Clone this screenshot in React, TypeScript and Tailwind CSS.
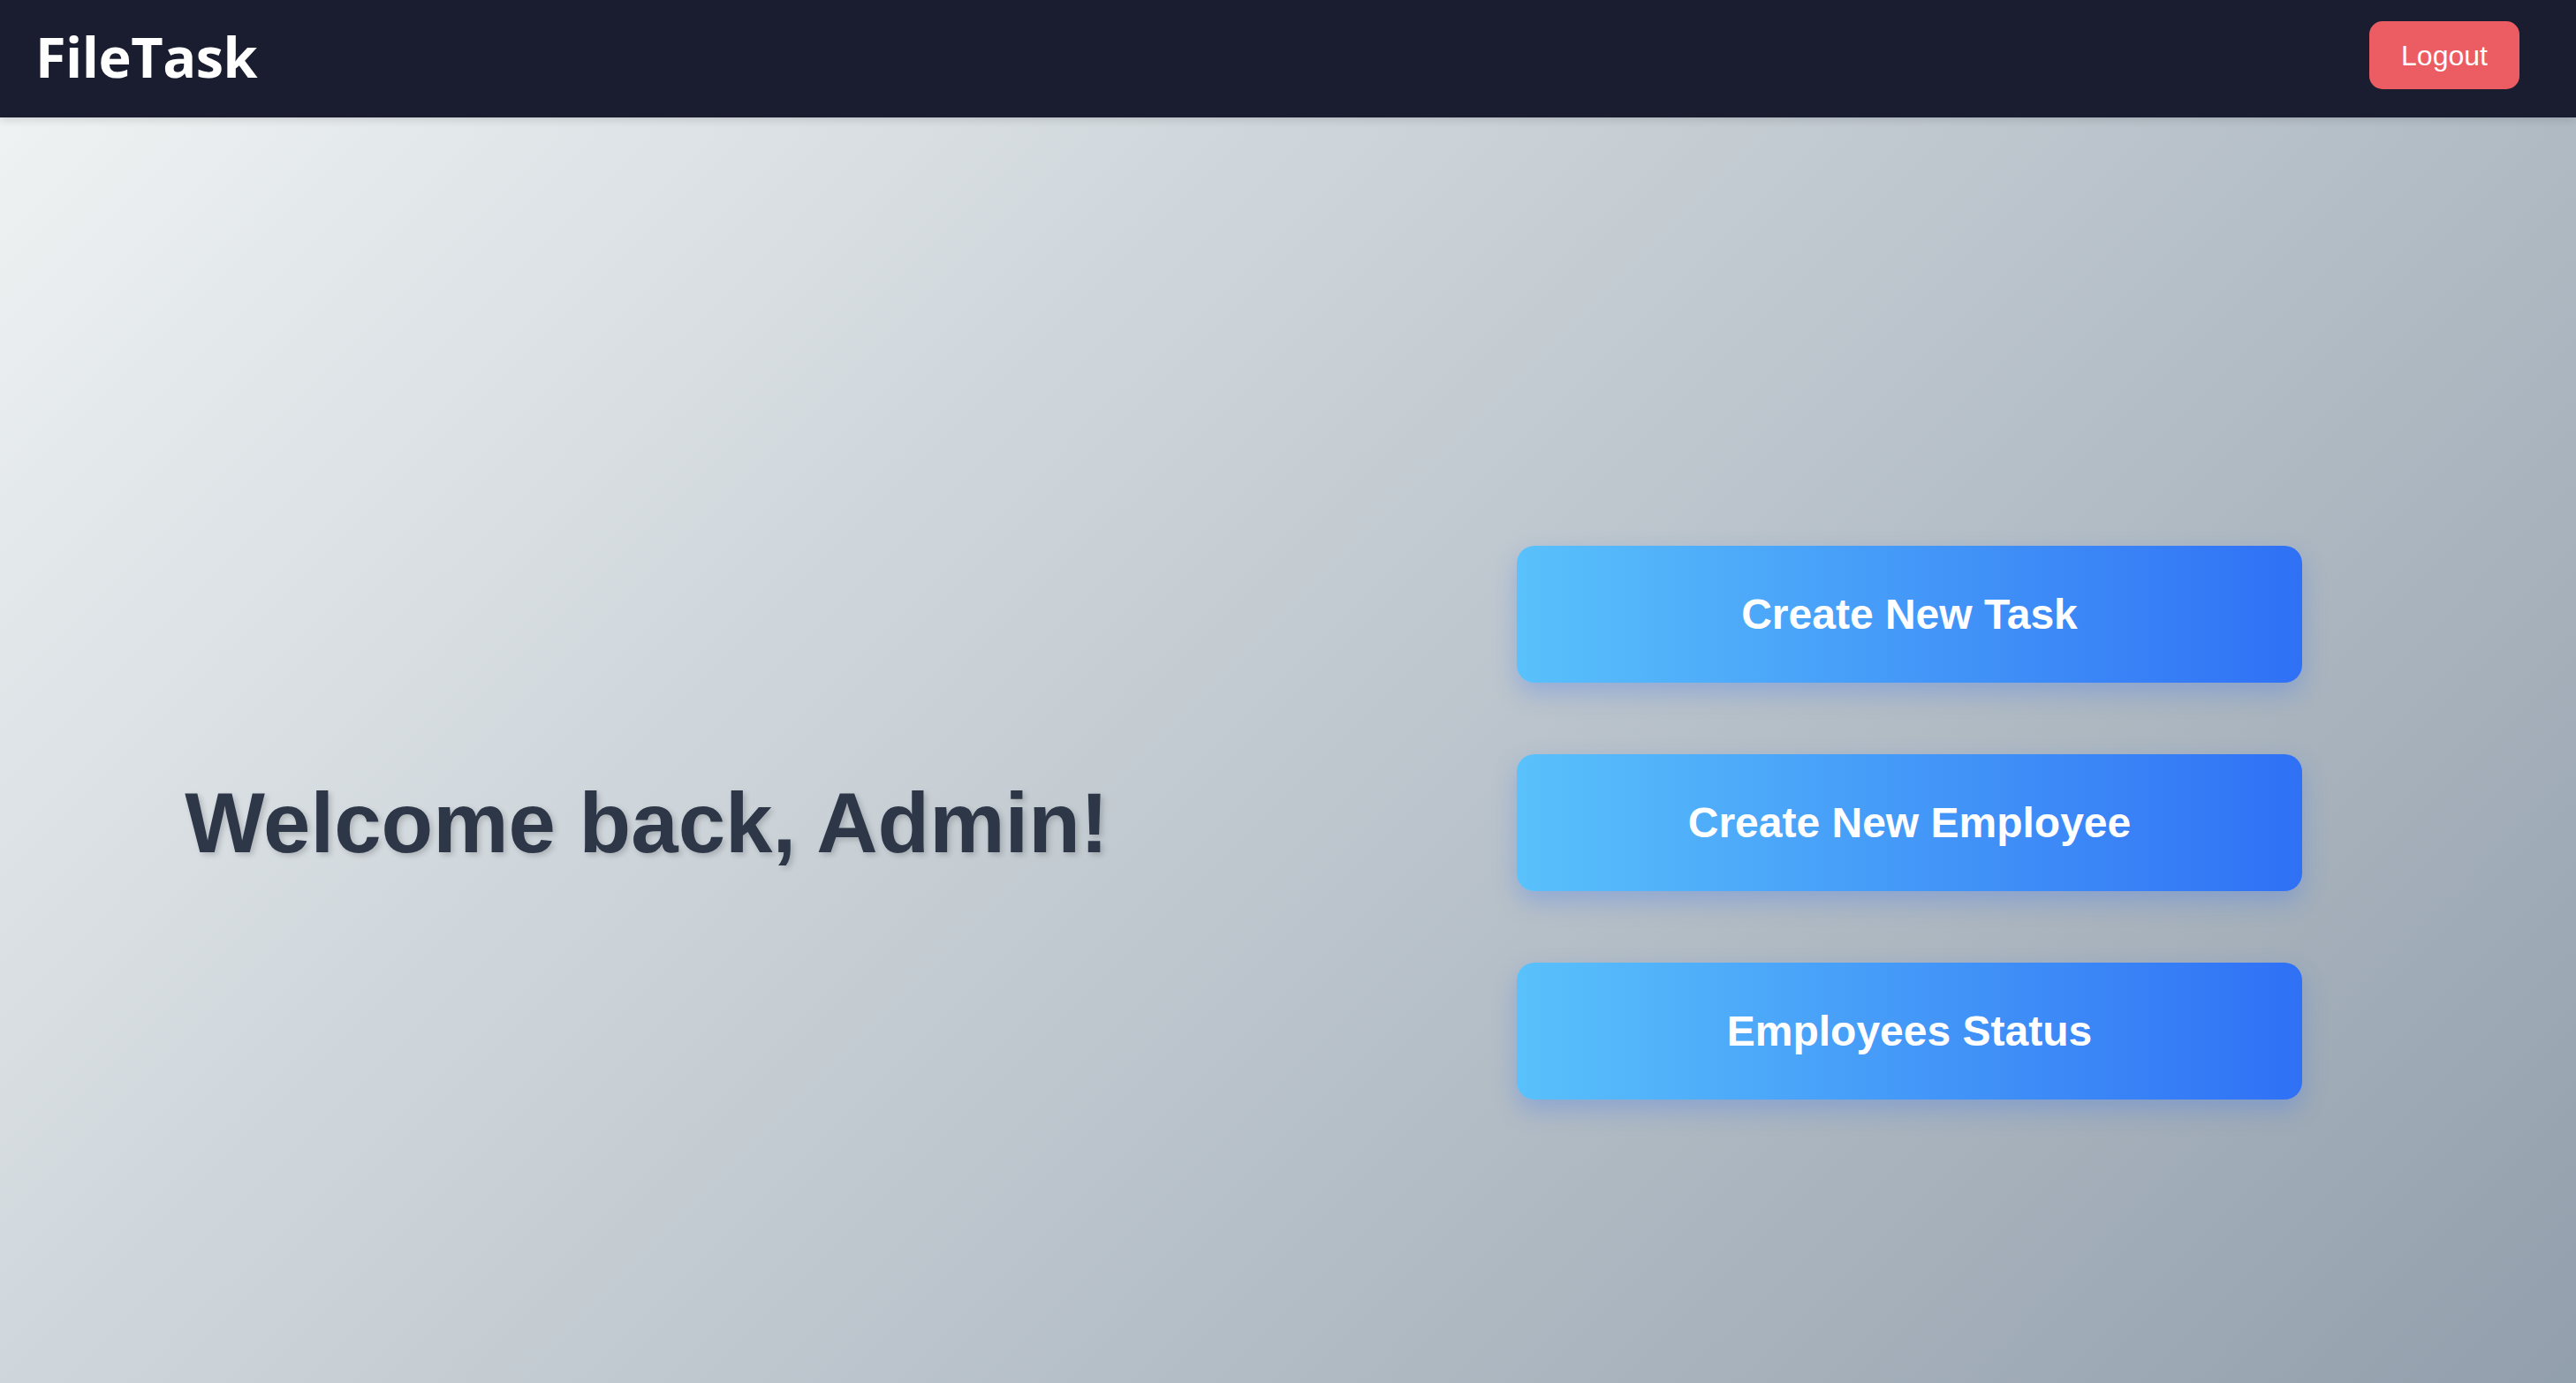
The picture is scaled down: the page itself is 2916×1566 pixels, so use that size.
import React from "react";

export default function App() {
  const buttons = ["Create New Task", "Create New Employee", "Employees Status"];
  return (
    <div className="w-[2916px] h-[1566px] overflow-hidden flex flex-col">
      <nav className="relative z-10 h-[133px] shrink-0 bg-[#1a1d30] flex justify-between items-start pl-[40px] pr-[64px] shadow-[0_2px_10px_rgba(0,0,0,0.15)]">
        <div className="h-full flex items-center pb-[6px]">
          <span className="text-white font-bold text-[63px] leading-none tracking-[-0.5px] [font-family:'Open_Sans','Noto_Sans',sans-serif]">
            FileTask
          </span>
        </div>
        <button className="mt-[24px] h-[77px] w-[170px] rounded-[15px] bg-[#ec5c63] text-white text-[32px] leading-none [font-family:'Liberation_Sans',Arial,sans-serif] flex items-center justify-center">
          Logout
        </button>
      </nav>
      <main className="flex-1 bg-[linear-gradient(135deg,#eef2f3,#929fac)] flex items-center pt-[164px]">
        <div className="w-[1458px] flex justify-center pl-[6px]">
          <h1 className="text-[#2d3748] font-bold text-[96px] leading-none [font-family:'Liberation_Sans',Arial,sans-serif] [text-shadow:3px_3px_6px_rgba(0,0,0,0.18)]">
            Welcome back, Admin!
          </h1>
        </div>
        <div className="flex-1 pl-[259px]">
          <div className="w-[889px] flex flex-col gap-[81px]">
            {buttons.map((b) => (
              <button
                key={b}
                className="h-[155px] w-full rounded-[20px] bg-[linear-gradient(90deg,#59c1fb,#2f70f5)] text-white font-bold text-[48px] leading-none [font-family:'Liberation_Sans',Arial,sans-serif] shadow-[0_12px_28px_rgba(47,112,245,0.28)]"
              >
                {b}
              </button>
            ))}
          </div>
        </div>
      </main>
    </div>
  );
}
